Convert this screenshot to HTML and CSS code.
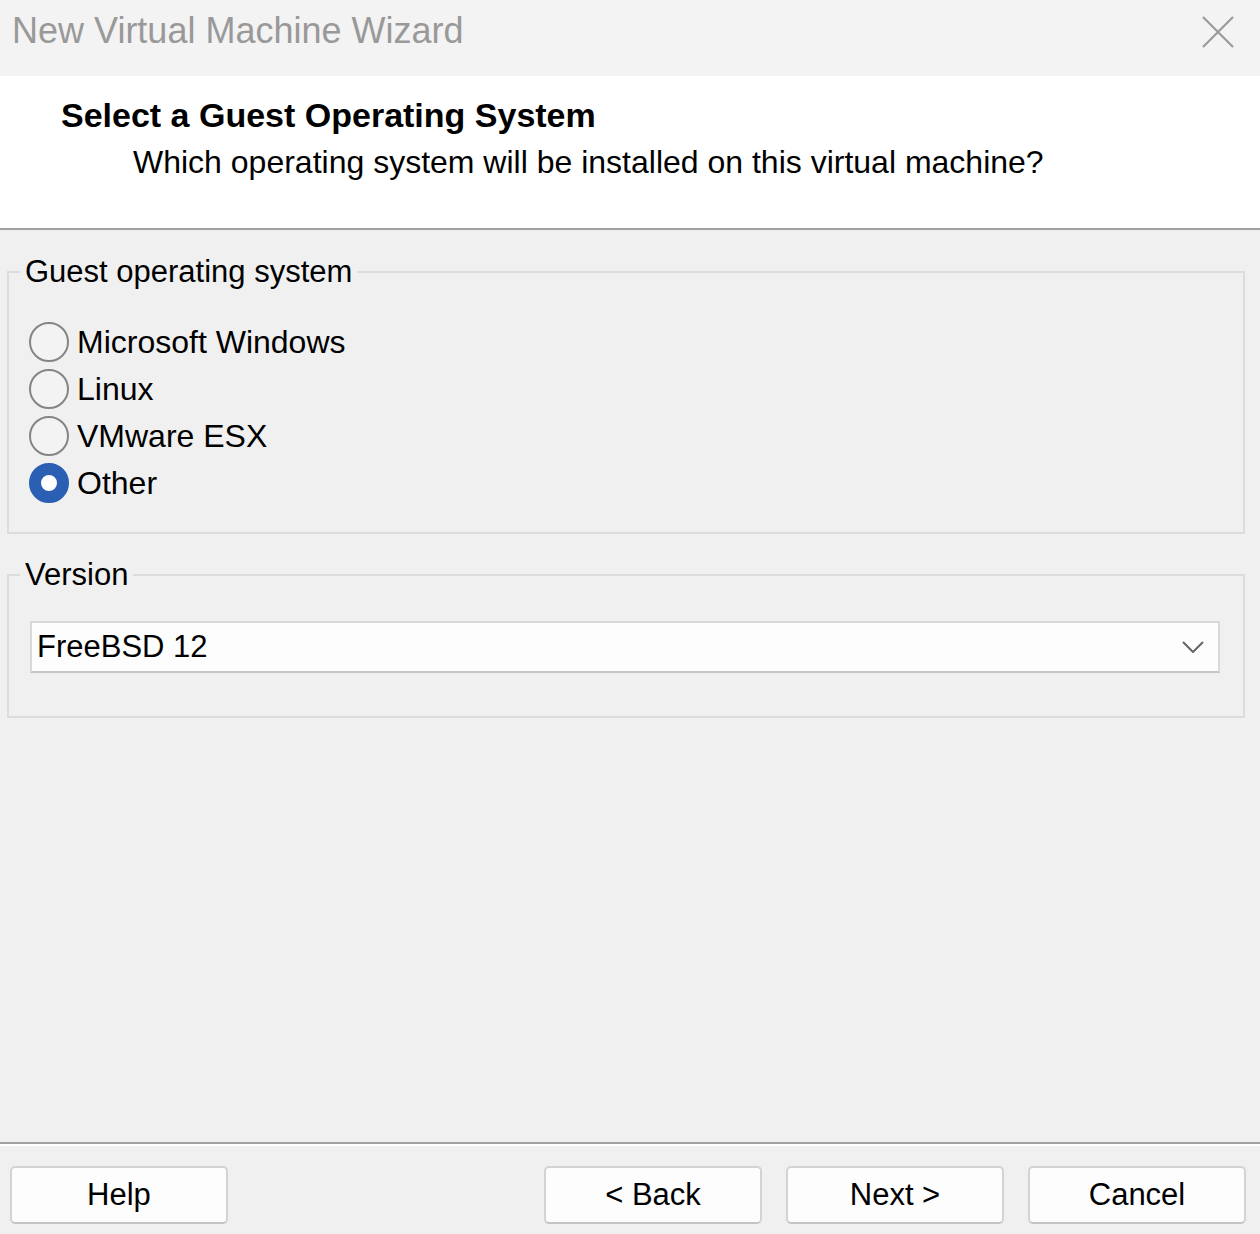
FILE: index.html
```html
<!DOCTYPE html>
<html lang="en">
<head>
<meta charset="utf-8">
<title>New Virtual Machine Wizard</title>
<link rel="stylesheet" href="styles.css">
</head>
<body>
<div class="window">
  <div class="titlebar">
    <span class="title">New Virtual Machine Wizard</span>
    <svg class="close" width="32" height="32" viewBox="0 0 32 32" aria-label="Close">
      <path d="M1 1 L31 31 M31 1 L1 31" stroke="#9a9a9a" stroke-width="2.2" fill="none"/>
    </svg>
  </div>
  <div class="header">
    <div class="header-title">Select a Guest Operating System</div>
    <div class="header-sub">Which operating system will be installed on this virtual machine?</div>
  </div>
  <div class="content">
    <fieldset class="group group-os">
      <legend>Guest operating system</legend>
      <div class="radio-row"><span class="radio"></span><span class="label">Microsoft Windows</span></div>
      <div class="radio-row"><span class="radio"></span><span class="label">Linux</span></div>
      <div class="radio-row"><span class="radio"></span><span class="label">VMware ESX</span></div>
      <div class="radio-row"><span class="radio checked"></span><span class="label">Other</span></div>
    </fieldset>
    <fieldset class="group group-version">
      <legend>Version</legend>
      <div class="combo" role="combobox">
        <span class="combo-value">FreeBSD 12</span>
        <svg class="chevron" width="22" height="12" viewBox="0 0 22 12">
          <path d="M1 1 L11 11 L21 1" stroke="#666" stroke-width="2" fill="none"/>
        </svg>
      </div>
    </fieldset>
  </div>
  <div class="footer">
    <button class="btn">Help</button>
    <div class="nav">
      <button class="btn">&lt; Back</button>
      <button class="btn">Next &gt;</button>
      <button class="btn">Cancel</button>
    </div>
  </div>
</div>
</body>
</html>
```

FILE: styles.css
```css
* { box-sizing: border-box; }

html, body {
  margin: 0;
  padding: 0;
  background: #f0f0f0;
}

body {
  font-family: "Liberation Sans", Arial, sans-serif;
  color: #000;
}

.window {
  width: 1260px;
  height: 1234px;
  display: flex;
  flex-direction: column;
}

.titlebar {
  height: 76px;
  flex: none;
  background: #f3f3f3;
  display: flex;
  align-items: flex-start;
  justify-content: space-between;
  padding: 9px 26px 0 12px;
}

.title {
  font-size: 36px;
  line-height: 44px;
  color: #999;
}

.close {
  margin-top: 7px;
}

.header {
  flex: none;
  height: 154px;
  background: #fff;
  border-bottom: 2px solid #a0a0a0;
  padding-top: 19px;
}

.header-title {
  font-weight: bold;
  font-size: 34px;
  line-height: 40px;
  padding-left: 61px;
}

.header-sub {
  font-size: 32px;
  line-height: 40px;
  margin-top: 7px;
  padding-left: 133px;
}

.content {
  flex: 1;
  padding: 0 15px 0 7px;
}

.group {
  margin: 0;
  border: 2px solid #dcdcdc;
  padding: 28px 23px 0 11px;
  min-width: 0;
}

.group legend {
  padding: 0 5px;
  font-size: 31px;
  line-height: 36px;
}

.group-os {
  margin-top: 24px;
  padding-bottom: 26px;
}

.group-version {
  margin-top: 23px;
  padding-bottom: 43px;
}

.radio-row {
  height: 47px;
  display: flex;
  align-items: center;
  margin-left: 9px;
  gap: 8px;
}

.radio {
  width: 40px;
  height: 40px;
  border-radius: 50%;
  border: 2px solid #858585;
  background: #f3f3f3;
  flex: none;
}

.radio.checked {
  border: 12px solid #2a5fb4;
  background: #fff;
}

.label {
  font-size: 32px;
  line-height: 40px;
}

.combo {
  margin-left: 10px;
  height: 52px;
  display: flex;
  align-items: center;
  justify-content: space-between;
  background: #fdfdfd;
  border: 2px solid #d9d9d9;
  border-bottom-color: #c4c4c4;
  padding: 0 14px 0 5px;
  font-size: 31px;
}

.footer {
  flex: none;
  border-top: 2px solid #a0a0a0;
  box-shadow: inset 0 2px 0 #fff;
  padding: 22px 14px 10px 10px;
  display: flex;
  justify-content: space-between;
}

.nav {
  display: flex;
  gap: 24px;
}

.btn {
  width: 218px;
  height: 58px;
  background: #fdfdfd;
  border: 2px solid #d3d3d3;
  border-bottom-color: #c4c4c4;
  border-radius: 5px;
  font-family: "Liberation Sans", Arial, sans-serif;
  font-size: 31px;
  color: #000;
  padding: 0;
}
```
